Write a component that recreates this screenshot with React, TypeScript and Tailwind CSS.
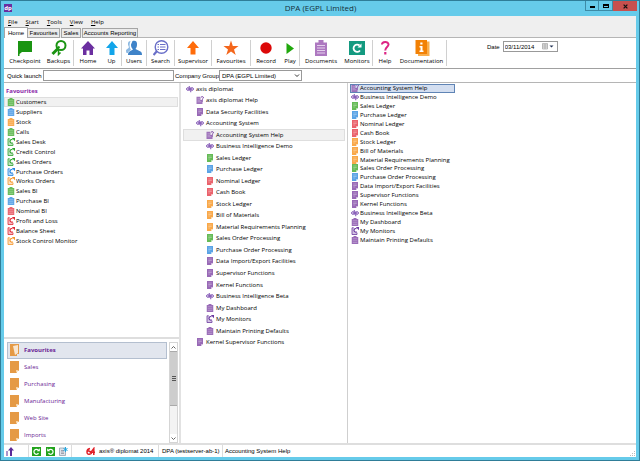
import type { ReactNode } from "react";

const PURPLE = "#8f5cb0";
const GREEN = "#58b548";
const BLUE = "#4c9be4";
const RED = "#e85560";
const ORANGE = "#f9a13a";

type Kind = "clip" | "monitor" | "doc" | "help" | "dp";
type Item = { label: string; kind: Kind; color: string; level?: number };

function Glyph({ kind, color }: { kind: Kind; color: string }) {
  if (kind === "dp") {
    return (
      <svg viewBox="0 0 16 16" className="h-2 w-2 shrink-0" aria-hidden="true" fill="none" stroke="#7a4bb0" strokeWidth="2">
        <circle cx="3.800" cy="8" r="2.600" />
        <path d="M6.500 2v9.500M9.500 4.800V14.500" />
        <circle cx="12.200" cy="8" r="2.600" />
      </svg>
    );
  }
  if (kind === "clip") {
    return (
      <svg viewBox="0 0 16 16" className="h-2 w-2 shrink-0" aria-hidden="true">
        <path d="M1.500 2H5V0h6v2h3.500V16h-13z" fill={color} fillOpacity=".9" />
        <path d="M3.500 5.500h9M3.500 9.500h9M3.500 13h9" stroke="#fff" strokeOpacity=".5" strokeWidth="1" />
      </svg>
    );
  }
  if (kind === "monitor") {
    return (
      <svg viewBox="0 0 16 16" className="h-2 w-2 shrink-0" aria-hidden="true" fill="none" stroke={color}>
        <path d="M2 2h5v12H2zM2 11h10v4H2z" fill={color} fillOpacity=".3" stroke="none" />
        <path d="M5.500 1.500H2V15h10v-3.500" strokeWidth="1.600" />
        <path d="M11.500 9.500A3.500 3.500 0 1 1 11 3.500" strokeWidth="2.200" />
        <path d="M9.500 0H16v6.500z" fill={color} stroke="none" />
      </svg>
    );
  }
  if (kind === "help") {
    return (
      <svg viewBox="0 0 16 16" className="h-2 w-2 shrink-0" aria-hidden="true">
        <path d="M1 1.500h8V8h4v8H1z" fill={color} fillOpacity=".85" />
        <path d="M3 5.500h5M3 8.500h5M3 11.500h8" stroke="#fff" strokeOpacity=".55" strokeWidth="1" />
        <path d="M10 2.500q2.500-3 4.800 0q.5 2-2.200 3.500v1.500" fill="none" stroke="#6c2f98" strokeWidth="1.800" />
        <path d="M11.500 9h2.200v2h-2.200z" fill="#6c2f98" />
      </svg>
    );
  }
  return (
    <svg viewBox="0 0 16 16" className="h-2 w-2 shrink-0" aria-hidden="true">
      <path d="M2 0h12v12l-4 4H2z" fill={color} fillOpacity=".92" />
      <path d="M4.500 4h7M4.500 7h7M4.500 10h4" stroke="#fff" strokeOpacity=".6" strokeWidth="1" />
      <path d="M10 16v-4h4z" fill="#fff" fillOpacity=".5" />
    </svg>
  );
}

const favourites: Item[] = [
  { label: "Customers", kind: "clip", color: GREEN },
  { label: "Suppliers", kind: "clip", color: BLUE },
  { label: "Stock", kind: "clip", color: ORANGE },
  { label: "Calls", kind: "clip", color: GREEN },
  { label: "Sales Desk", kind: "monitor", color: "#2fa32f" },
  { label: "Credit Control", kind: "monitor", color: "#2fa32f" },
  { label: "Sales Orders", kind: "monitor", color: "#2fa32f" },
  { label: "Purchase Orders", kind: "monitor", color: "#2484e0" },
  { label: "Works Orders", kind: "monitor", color: "#f5952a" },
  { label: "Sales BI", kind: "clip", color: GREEN },
  { label: "Purchase BI", kind: "clip", color: BLUE },
  { label: "Nominal BI", kind: "clip", color: RED },
  { label: "Profit and Loss", kind: "monitor", color: "#df2834" },
  { label: "Balance Sheet", kind: "monitor", color: "#df2834" },
  { label: "Stock Control Monitor", kind: "monitor", color: "#f5952a" },
];

const accounting: Item[] = [
  { label: "Accounting System Help", kind: "help", color: PURPLE },
  { label: "Business Intelligence Demo", kind: "dp", color: PURPLE },
  { label: "Sales Ledger", kind: "doc", color: GREEN },
  { label: "Purchase Ledger", kind: "doc", color: BLUE },
  { label: "Nominal Ledger", kind: "doc", color: RED },
  { label: "Cash Book", kind: "doc", color: RED },
  { label: "Stock Ledger", kind: "doc", color: ORANGE },
  { label: "Bill of Materials", kind: "doc", color: ORANGE },
  { label: "Material Requirements Planning", kind: "doc", color: ORANGE },
  { label: "Sales Order Processing", kind: "doc", color: GREEN },
  { label: "Purchase Order Processing", kind: "doc", color: BLUE },
  { label: "Data Import/Export Facilities", kind: "doc", color: PURPLE },
  { label: "Supervisor Functions", kind: "doc", color: PURPLE },
  { label: "Kernel Functions", kind: "doc", color: PURPLE },
  { label: "Business Intelligence Beta", kind: "dp", color: PURPLE },
  { label: "My Dashboard", kind: "clip", color: PURPLE },
  { label: "My Monitors", kind: "monitor", color: "#6c3aa0" },
  { label: "Maintain Printing Defaults", kind: "clip", color: PURPLE },
];

const tree: Item[] = [
  { label: "axis diplomat", kind: "dp", color: PURPLE, level: 0 },
  { label: "axis diplomat Help", kind: "help", color: PURPLE, level: 1 },
  { label: "Data Security Facilities", kind: "doc", color: PURPLE, level: 1 },
  { label: "Accounting System", kind: "dp", color: PURPLE, level: 1 },
  ...accounting.map((item) => ({ ...item, level: 2 })),
  { label: "Kernel Supervisor Functions", kind: "doc", color: PURPLE, level: 1 },
];

const indents = ["pl-[3px]", "pl-[13px]", "pl-[23px]"];

const row = "flex flex-1 items-center whitespace-nowrap";
const greyRow = "bg-[#f1f1f1] outline outline-1 -outline-offset-1 outline-[#dedede]";

type Tool = { label: string; width: string; icon: ReactNode };

const toolGroups: Tool[][] = [
  [
    {
      label: "Checkpoint",
      width: "w-[38px]",
      icon: <path d="M1 1h14v11H5l-2.500 2V16H1z" fill="#1a9412" />,
    },
    {
      label: "Backups",
      width: "w-[29px]",
      icon: (
        <g fill="none" stroke="#1a9412">
          <circle cx="10" cy="5.500" r="4.500" strokeWidth="2" />
          <path d="M6.500 9 1.500 14" strokeWidth="3" />
          <path d="M6.500 8.500 8.500 6.500" strokeWidth="2" />
          <path d="M7.500 9.500V14.500L9.500 12.500" strokeWidth="1.500" />
        </g>
      ),
    },
  ],
  [
    {
      label: "Home",
      width: "w-[28px]",
      icon: <path d="M8 1 15 8.500H13V15H9.500V10.500h-3V15H3V8.500H1z" fill="#6b2fa0" />,
    },
    { label: "Up", width: "w-[19px]", icon: <path d="M8 1 14 8H10.500V15h-5V8H2z" fill="#12a5ea" /> },
  ],
  [
    {
      label: "Users",
      width: "w-[24px]",
      icon: (
        <g>
          <path d="M6.500 1c3-1 5 .5 4.500 4 0 2-1 3-1.500 4l5 2.500c1 .5 1.500 1.500 1.500 3.500H2c0-2 .5-3 1.500-3.500L7 9.500C5.500 8 5 6.500 5 4.500z" fill="#3f83c8" />
          <path d="M4.500 1C2 1 1.500 4 2.500 6c.5 1 .5 1.500 0 2L0 10c0 1 0 2 .5 3h1.500c.5-2 2-2.500 3-3-1.500-2-2-6-.5-9z" fill="#8db9e2" />
        </g>
      ),
    },
  ],
  [
    {
      label: "Search",
      width: "w-[27px]",
      icon: (
        <g fill="none" stroke="#6a6fc8">
          <circle cx="8.500" cy="7" r="6.300" strokeWidth="1.400" />
          <path d="M4 11 .5 15" strokeWidth="2.200" />
          <path d="M7 4.500h5.500M7 7h5.500M7 9.500h5.500M4.500 4.500H6M4.500 7H6M4.500 9.500H6" strokeWidth="1" />
        </g>
      ),
    },
  ],
  [{ label: "Supervisor", width: "w-[36px]", icon: <path d="M8 1 14 8H10.500V14.500h-5V8H2z" fill="#ff6c0a" /> }],
  [
    {
      label: "Favourites",
      width: "w-[38px]",
      icon: <path d="M8 .5 9.800 6H15.500L11 9.500 12.700 15 8 11.600 3.300 15 5 9.500.5 6H6.200z" fill="#f4661b" />,
    },
  ],
  [
    { label: "Record", width: "w-[30px]", icon: <circle cx="8" cy="8" r="5.700" fill="#dc0808" /> },
    { label: "Play", width: "w-[18px]", icon: <path d="M4.500 3v11L12 8.500z" fill="#20a80c" /> },
  ],
  [
    {
      label: "Documents",
      width: "w-[42px]",
      icon: (
        <g>
          <path d="M2 2.500H5.500V0h5v2.500H14V16H2z" fill="#ad78c0" />
          <path d="M4 5.500h8M4 8h8M4 10.500h8M4 13h8" stroke="#e4d0ec" strokeWidth="1" />
        </g>
      ),
    },
    {
      label: "Monitors",
      width: "w-[30px]",
      icon: (
        <g>
          <path d="M0 1h16v14H0z" fill="#149a80" />
          <path d="M11 10.500a3.600 3.600 0 1 1-.5-5" fill="none" stroke="#fff" strokeWidth="1.800" />
          <path d="M8.500 7.500h4v-4z" fill="#fff" />
        </g>
      ),
    },
  ],
  [
    {
      label: "Help",
      width: "w-[24px]",
      icon: (
        <g>
          <path d="M5 4.500C5 1.500 11.500 1 11.500 4.500 11.500 7 8.200 7 8.200 10.500" fill="none" stroke="#dd2585" strokeWidth="2" />
          <path d="M7.200 12h2.200v2.500H7.200z" fill="#dd2585" />
        </g>
      ),
    },
    {
      label: "Documentation",
      width: "w-[49px]",
      icon: (
        <g>
          <path d="M4 1.500h11.500V16H4z" fill="#f9ae4c" />
          <path d="M1.500 0h11.500v14H1.500z" fill="#f28105" />
          <path d="M6.300 2.500h2.200v2H6.300zM5.500 6h3v4.500h1V12h-4v-1.500h1v-3h-1z" fill="#fff" />
        </g>
      ),
    },
  ],
];

const tab = "border border-[#a5a5a5] whitespace-nowrap";
const statusCell = "flex items-center border-r border-[#dcdcdc]";

export default function App() {
  return (
    <div className="flex h-screen flex-col border border-[#2f7d98] bg-[#66cbea] px-[3px] pb-[3px] font-['Open_Sans',sans-serif] text-[6px] leading-[8px] text-black">
      <header className="-mr-[1px] flex h-[15px] shrink-0 items-start">
        <div className="flex flex-1 pt-[3px]">
          <span className="flex h-2 w-2 items-center justify-center bg-[#6a2fa0] font-bold leading-none text-white">dp</span>
        </div>
        <h1 className="pt-[1px] text-[8px] leading-[11px] text-[#15303a]">DPA (EGPL Limited)</h1>
        <div className="flex flex-1 justify-end">
          <button aria-label="Minimise" className="flex h-[10px] w-[14px] items-end justify-center border border-t-0 border-[#3d8ba6] pb-[2px]">
            <span className="h-[2px] w-[5px] bg-black" />
          </button>
          <button aria-label="Maximise" className="flex h-[10px] w-[14px] items-center justify-center border border-t-0 border-l-0 border-[#3d8ba6]">
            <span className="h-1 w-[6px] border border-t-2 border-black" />
          </button>
          <button aria-label="Close" className="flex h-[10px] w-6 items-center justify-center bg-[#c8504e]">
            <svg viewBox="0 0 8 8" className="h-[5px] w-[5px]" stroke="#111" strokeWidth="2" aria-hidden="true">
              <path d="M1 1l6 6M7 1 1 7" />
            </svg>
          </button>
        </div>
      </header>

      <div className="flex min-h-0 flex-1 flex-col bg-white">
        <nav className="flex h-[11px] shrink-0 items-center gap-2 bg-[#efefef] pl-1">
          {["File", "Start", "Tools", "View", "Help"].map((name) => (
            <button key={name}>
              <span className="underline">{name[0]}</span>
              {name.slice(1)}
            </button>
          ))}
        </nav>

        <div role="tablist" className="flex h-[11px] shrink-0 items-end bg-[#efefef] font-['Liberation_Sans',sans-serif]">
          <button role="tab" aria-selected="true" className={`${tab} h-[11px] w-6 border-b-0 bg-white`}>Home</button>
          <button role="tab" aria-selected="false" className={`${tab} mr-[1px] h-[10px] w-8 border-l-0 bg-[#ebebeb]`}>Favourites</button>
          <button role="tab" aria-selected="false" className={`${tab} mr-[1px] h-[10px] w-5 bg-[#ebebeb]`}>Sales</button>
          <button role="tab" aria-selected="false" className={`${tab} h-[10px] w-[56px] bg-[#ebebeb]`}>Accounts Reporting</button>
          <span className="flex-1 self-stretch border-b border-[#b5b5b5]" />
        </div>

        <div className="flex h-[31px] shrink-0 items-start border-b border-[#a0a0a0] pl-[2px] pt-[2px]">
          {toolGroups.map((group) => (
            <div key={group[0].label} className="flex h-[26px] border-r border-[#d0d0d0]">
              {group.map((tool) => (
                <button key={tool.label} className={`flex flex-col items-center gap-[1px] whitespace-nowrap ${tool.width}`}>
                  <svg viewBox="0 0 16 16" className="h-4 w-4 shrink-0" aria-hidden="true">
                    {tool.icon}
                  </svg>
                  <span>{tool.label}</span>
                </button>
              ))}
            </div>
          ))}
          <div className="ml-10 flex items-center gap-[3px] pt-[1px] font-['Liberation_Sans',sans-serif]">
            <label htmlFor="date">Date</label>
            <div className="flex h-[11px] w-[55px] items-center border border-[#999]">
              <input id="date" defaultValue="03/11/2014" className="w-[38px] min-w-0 pl-[1px] outline-none" />
              <button aria-label="Open calendar" className="flex">
                <svg viewBox="0 0 12 7" className="h-[7px] w-3" aria-hidden="true">
                  <path d="M.5.5h5v5.500h-5zM.5 2h5M.5 4h5M3 1v5" fill="#e8e8e8" stroke="#999" strokeWidth=".6" />
                  <path d="M7.500 2.500h4l-2 2z" fill="#235" />
                </svg>
              </button>
            </div>
          </div>
        </div>

        <div className="flex h-[14px] shrink-0 items-center border-b border-[#b5b5b5] pl-[3px] font-['Liberation_Sans',sans-serif]">
          <label htmlFor="quick" className="w-9 whitespace-nowrap">Quick launch</label>
          <input id="quick" className="h-[11px] w-[131px] border border-[#999] px-[2px] outline-none" />
          <label htmlFor="company" className="ml-[1px] w-11 whitespace-nowrap">Company Group</label>
          <div className="grid w-[83px] items-center">
            <select id="company" className="col-start-1 row-start-1 h-[11px] appearance-none border border-[#999] pl-[2px] outline-none">
              <option>DPA (EGPL Limited)</option>
            </select>
            <svg viewBox="0 0 6 4" className="pointer-events-none col-start-1 row-start-1 mr-[2px] h-1 w-[6px] justify-self-end" fill="none" stroke="#333" aria-hidden="true">
              <path d="M1 .5 3 2.500 5 .5" />
            </svg>
          </div>
        </div>

        <main className="flex min-h-0 flex-1">
          <aside className="flex w-[177px] shrink-0 flex-col justify-between border-r-2 border-[#e2e2e2]">
            <section>
              <h2 className="pl-[2px] pt-[3px] font-bold leading-[11px] text-[#8a1fa8]">Favourites</h2>
              <ul className="flex h-[149px] flex-col pr-[1px]">
                {favourites.map((item, i) => (
                  <li key={item.label} className="flex flex-1">
                    <button className={`${row} gap-[1px] pl-[3px] ${i === 0 ? greyRow : ""}`}>
                      <Glyph kind={item.kind} color={item.color} />
                      {item.label}
                    </button>
                  </li>
                ))}
              </ul>
            </section>
            <section className="flex border-t-2 border-[#dedede] pl-[3px] pr-[1px] pt-[3px]">
              <ul className="flex h-[101px] flex-1 flex-col text-[#6a2394]">
                {["Favourites", "Sales", "Purchasing", "Manufacturing", "Web Site", "Imports"].map((name, i) => (
                  <li key={name} className="flex flex-1">
                    <button className={`${row} gap-1 border pl-[2px] ${i === 0 ? "border-[#b4bfcf] bg-[#e2e6ee] font-bold" : "border-transparent"}`}>
                      <svg viewBox="0 0 10 12" className="h-3 w-[10px]" aria-hidden="true">
                        <path d="M0 0h9v10H7v2H0z" fill="#e59a45" />
                        {i === 0 ? <path d="M3 2l5-1v8l-3 2z" fill="#fff" fillOpacity=".75" /> : <path d="M6 12V9h3z" fill="#f6d3a6" />}
                      </svg>
                      {name}
                    </button>
                  </li>
                ))}
              </ul>
              <div className="ml-[2px] flex w-[9px] flex-col border border-[#d5d5d5] bg-[#f3f3f3]">
                <button aria-label="Scroll up" className="flex h-2 items-center justify-center bg-white">
                  <svg viewBox="0 0 5 3" className="h-[3px] w-[5px]" fill="none" stroke="#666" aria-hidden="true">
                    <path d="M.5 2.500l2-2 2 2" />
                  </svg>
                </button>
                <div className="flex h-[55px] flex-col items-center justify-center gap-[1px] border-y border-[#aaa] bg-[#cdcdcd]">
                  <span className="h-[1px] w-1 bg-[#555]" />
                  <span className="h-[1px] w-1 bg-[#555]" />
                  <span className="h-[1px] w-1 bg-[#555]" />
                </div>
                <button aria-label="Scroll down" className="mt-auto flex h-2 items-center justify-center bg-white">
                  <svg viewBox="0 0 5 3" className="h-[3px] w-[5px]" fill="none" stroke="#666" aria-hidden="true">
                    <path d="M.5.5l2 2 2-2" />
                  </svg>
                </button>
              </div>
            </section>
          </aside>

          <section className="w-[167px] shrink-0 border-r border-[#cfcfcf] px-[2px]">
            <ul className="flex h-[265px] flex-col">
              {tree.map((item, i) => (
                <li key={item.label} className="flex flex-1">
                  <button className={`${row} gap-[2px] ${indents[item.level ?? 0]} ${i === 4 ? greyRow : ""}`}>
                    <Glyph kind={item.kind} color={item.color} />
                    {item.label}
                  </button>
                </li>
              ))}
            </ul>
          </section>

          <section className="flex-1 pl-[2px]">
            <ul className="flex h-[161px] w-[105px] flex-col pt-[1px]">
              {accounting.map((item, i) => (
                <li key={item.label} className="flex flex-1">
                  <button
                    className={`${row} gap-[1px] pl-[1px] ${i === 0 ? "bg-[#d3def0] outline outline-1 -outline-offset-1 outline-[#5f84b5]" : ""}`}
                  >
                    <Glyph kind={item.kind} color={item.color} />
                    {item.label}
                  </button>
                </li>
              ))}
            </ul>
          </section>
        </main>

        <footer className="flex h-[14px] shrink-0 border-t-2 border-[#dedede] font-['Liberation_Sans',sans-serif]">
          <div className={`${statusCell} w-[25px] pl-[2px]`}>
            <svg viewBox="0 0 8 9" className="h-[9px] w-2" fill="#5b2a98" aria-hidden="true">
              <path d="M5 0 8 3.500H6V9H4V3.500H2zM.5 4h1v5h-1z" />
            </svg>
          </div>
          <div className={`${statusCell} w-[43px] justify-between px-[3px]`}>
            <svg viewBox="0 0 9 9" className="h-[9px] w-[9px]" aria-hidden="true">
              <path d="M0 0h9v9H0z" fill="#22a31c" />
              <path d="M6.500 6.200A2.500 2.500 0 1 1 6.200 3" fill="none" stroke="#fff" strokeWidth="1.200" />
              <path d="M4.800 4.200h3v-3z" fill="#fff" />
            </svg>
            <svg viewBox="0 0 9 9" className="h-[9px] w-[9px]" aria-hidden="true">
              <path d="M0 0h9v9H0z" fill="#22a31c" />
              <path d="M2.500 6.200A2.500 2.500 0 1 0 2.800 3" fill="none" stroke="#fff" strokeWidth="1.200" />
              <path d="M4.200 4.200h-3v-3z" fill="#fff" />
            </svg>
            <svg viewBox="0 0 9 9" className="h-[9px] w-[9px]" aria-hidden="true">
              <path d="M.5 1h6v7.500h-6z" fill="#dde3ea" stroke="#8a95a3" strokeWidth=".7" />
              <path d="M2 3.500h3M2 5h3M2 6.500h3" stroke="#778" strokeWidth=".6" />
              <path d="M6.500 0v5M4.500 1.500l4 2M8.500 1.500l-4 2" stroke="#23a7e0" />
            </svg>
          </div>
          <div className={`${statusCell} w-[87px] gap-1 pl-[14px]`}>
            <svg viewBox="0 0 9 9" className="h-[9px] w-[9px] shrink-0" fill="none" stroke="#e02028" strokeWidth="1.500" aria-hidden="true">
              <path d="M4 1.500Q1 2 1 5T4 7 4 4.500 1.500 5M7.800 8V1.500L5 5.200H9" />
            </svg>
            <span className="whitespace-nowrap">axis® diplomat 2014</span>
          </div>
          <div className={`${statusCell} w-16 whitespace-nowrap pl-[3px]`}>DPA (testserver-ab-1)</div>
          <div className="flex flex-1 items-center pl-[2px]">Accounting System Help</div>
          <svg viewBox="0 0 6 6" className="h-[6px] w-[6px] self-end" fill="#bbb" aria-hidden="true">
            <path d="M4 0h1v1H4zM2 2h1v1H2zM4 2h1v1H4zM0 4h1v1H0zM2 4h1v1H2zM4 4h1v1H4z" />
          </svg>
        </footer>
      </div>
    </div>
  );
}
